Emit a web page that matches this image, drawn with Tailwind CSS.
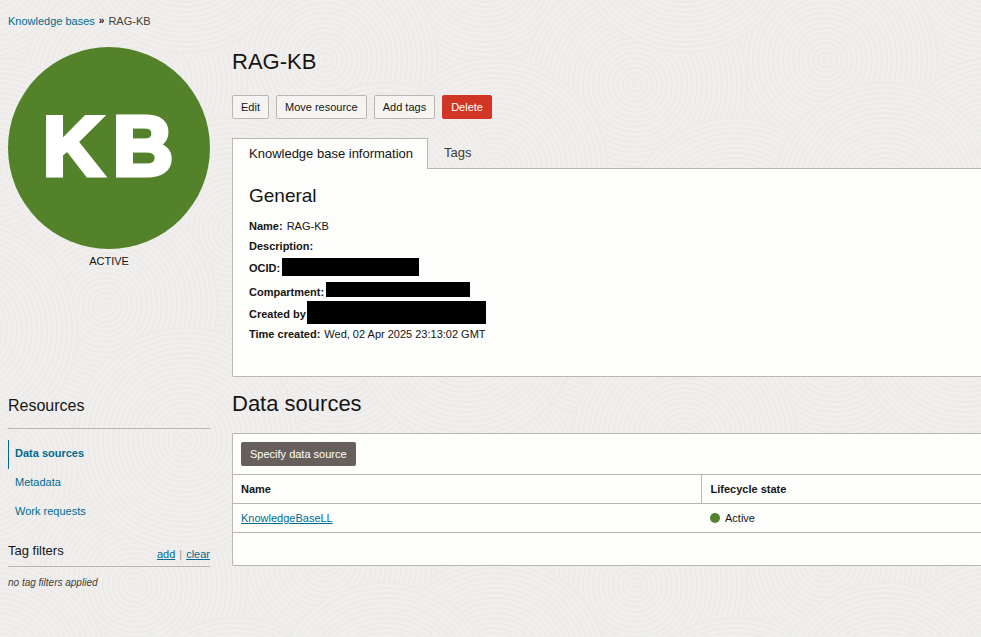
<!DOCTYPE html>
<html lang="en">
<head>
<meta charset="utf-8">
<meta name="viewport" content="width=device-width, initial-scale=1">
<title>RAG-KB</title>
<script src="https://cdn.jsdelivr.net/npm/@tailwindcss/browser@4"></script>
</head>
<body class="relative isolate min-h-screen overflow-x-hidden bg-[#f0efed] font-['Liberation_Sans',Arial,sans-serif] text-[11px] leading-5 text-[#161513]">
<!-- Raked-sand page texture: overlapping discs of concentric rings -->
<svg class="absolute inset-0 -z-10 h-full w-full" aria-hidden="true">
  <defs>
    <g id="disc" fill="#f0efed" stroke="#ecebe9" stroke-width="2">
      <circle r="112"/><circle r="107"/><circle r="102"/><circle r="97"/><circle r="92"/><circle r="87"/><circle r="82"/><circle r="77"/><circle r="72"/><circle r="67"/><circle r="62"/><circle r="57"/><circle r="52"/><circle r="47"/><circle r="42"/><circle r="37"/><circle r="32"/><circle r="27"/><circle r="22"/><circle r="17"/><circle r="12"/><circle r="7"/><circle r="2"/>
    </g>
    <pattern id="sand" x="-15" y="-30" width="500" height="500" patternUnits="userSpaceOnUse">
      <use href="#disc" x="0" y="0"/><use href="#disc" x="500" y="0"/><use href="#disc" x="0" y="500"/><use href="#disc" x="500" y="500"/>
      <use href="#disc" x="340" y="90"/><use href="#disc" x="150" y="115"/>
      <use href="#disc" x="10" y="200"/><use href="#disc" x="510" y="200"/>
      <use href="#disc" x="250" y="260"/><use href="#disc" x="400" y="225"/>
      <use href="#disc" x="120" y="335"/><use href="#disc" x="350" y="380"/>
      <use href="#disc" x="-20" y="360"/><use href="#disc" x="480" y="360"/>
      <use href="#disc" x="200" y="-30"/><use href="#disc" x="200" y="470"/>
    </pattern>
  </defs>
  <rect width="100%" height="100%" fill="url(#sand)"/>
</svg>

<nav aria-label="Breadcrumb" class="flex gap-1 px-2 pt-[11px] pb-4">
  <a href="#" class="text-[#006b8f]">Knowledge bases</a><span class="text-[10px] font-bold">»</span><span class="text-[#403c38]">RAG-KB</span>
</nav>

<div class="flex items-start gap-[22px] pl-2">
  <aside class="w-[202px] shrink-0">
    <svg viewBox="0 0 202 202" role="img" aria-label="KB" class="block w-full">
      <circle cx="101" cy="101" r="101" fill="#53822b"/>
      <g fill="#fff" stroke="#fff" stroke-width="5" font-size="83" font-weight="700">
        <text x="35" y="128">K</text>
        <text x="105" y="128">B</text>
      </g>
    </svg>
    <p class="pt-[2px] text-center">ACTIVE</p>

    <h2 class="mt-[121px] border-b border-[#bcb6b1] pt-1 pb-3 text-[16px] leading-5">Resources</h2>
    <ul class="pt-[11px] leading-[27px] text-[#006b8f]">
      <li class="border-l border-[#006b8f] pb-[2px] pl-[6px] font-bold"><a href="#" aria-current="page">Data sources</a></li>
      <li class="border-l border-transparent pb-[2px] pl-[6px]"><a href="#">Metadata</a></li>
      <li class="border-l border-transparent pb-[2px] pl-[6px]"><a href="#">Work requests</a></li>
    </ul>
    <div class="mt-[14px] flex justify-between border-b border-[#bcb6b1] pb-[2px]">
      <h3 class="text-[13px] leading-5">Tag filters</h3>
      <p class="flex gap-1 pt-[3px] text-[#006b8f]"><a href="#" class="underline">add</a><span class="text-[#9a9590]">|</span><a href="#" class="underline">clear</a></p>
    </div>
    <p class="pt-[6px] text-[10px] text-[#403c38] italic">no tag filters applied</p>
  </aside>

  <main class="min-w-0 flex-1">
    <h1 class="text-[22px] leading-[30px]">RAG-KB</h1>
    <div class="mt-[18px] flex gap-[7px]">
      <button class="h-6 rounded-xs border border-[#bcb6b1] bg-[#f5f4f2] px-2">Edit</button>
      <button class="h-6 rounded-xs border border-[#bcb6b1] bg-[#f5f4f2] px-2">Move resource</button>
      <button class="h-6 rounded-xs border border-[#bcb6b1] bg-[#f5f4f2] px-2">Add tags</button>
      <button class="h-6 rounded-xs border border-[#d13624] bg-[#d13624] px-2 text-white">Delete</button>
    </div>

    <div role="tablist" class="relative mt-[19px] flex text-[13px]">
      <button role="tab" aria-selected="true" class="-mb-px h-[31px] border border-b-0 border-[#bcb6b1] bg-[#fdfdfb] pr-[14px] pl-4">Knowledge base information</button>
      <button role="tab" aria-selected="false" class="h-[29px] px-4 text-[#403c38]">Tags</button>
    </div>
    <section role="tabpanel" class="rounded-bl-xs border border-r-0 border-[#bcb6b1] bg-[#fdfdfb] px-4 pt-[15px] pb-8">
      <h2 class="text-[19px] leading-6">General</h2>
      <ul class="pt-2">
        <li class="flex h-5 gap-1"><b>Name:</b>RAG-KB</li>
        <li class="flex h-5"><b>Description:</b></li>
        <li class="flex h-6 gap-[2px] leading-6"><b>OCID:</b><span class="mt-[2px] h-[18px] w-[137px] bg-black"></span></li>
        <li class="flex h-6 gap-[2px] leading-6"><b>Compartment:</b><span class="mt-[2px] h-[15px] w-[144px] bg-black"></span></li>
        <li class="flex h-5 items-end gap-px"><b>Created by</b><span class="h-[23px] w-[179px] bg-black"></span></li>
        <li class="flex h-5 gap-1"><b>Time created:</b>Wed, 02 Apr 2025 23:13:02 GMT</li>
      </ul>
    </section>

    <h2 class="mt-3 text-[22px] leading-[30px]">Data sources</h2>
    <section class="mt-[14px] rounded-l-xs border border-r-0 border-[#bcb6b1] bg-[#fdfdfb] pb-8">
      <div class="px-2 py-2">
        <button class="block h-6 rounded-xs bg-[#665f5b] px-[9px] text-white">Specify data source</button>
      </div>
      <table class="w-full table-fixed border-collapse text-left">
        <thead>
          <tr class="h-[29px] border-y border-[#bcb6b1]"><th class="w-[468px] border-r border-[#bcb6b1] px-2">Name</th><th class="px-[9px]">Lifecycle state</th></tr>
        </thead>
        <tbody>
          <tr class="h-[29px] border-b border-[#bcb6b1]">
            <td class="px-2"><a href="#" class="text-[#006b8f] underline">KnowledgeBaseLL</a></td>
            <td class="px-[9px]"><span class="flex items-center gap-[5px]"><span class="size-[10px] rounded-full bg-[#53822b]"></span>Active</span></td>
          </tr>
        </tbody>
      </table>
    </section>
  </main>
</div>
</body>
</html>
